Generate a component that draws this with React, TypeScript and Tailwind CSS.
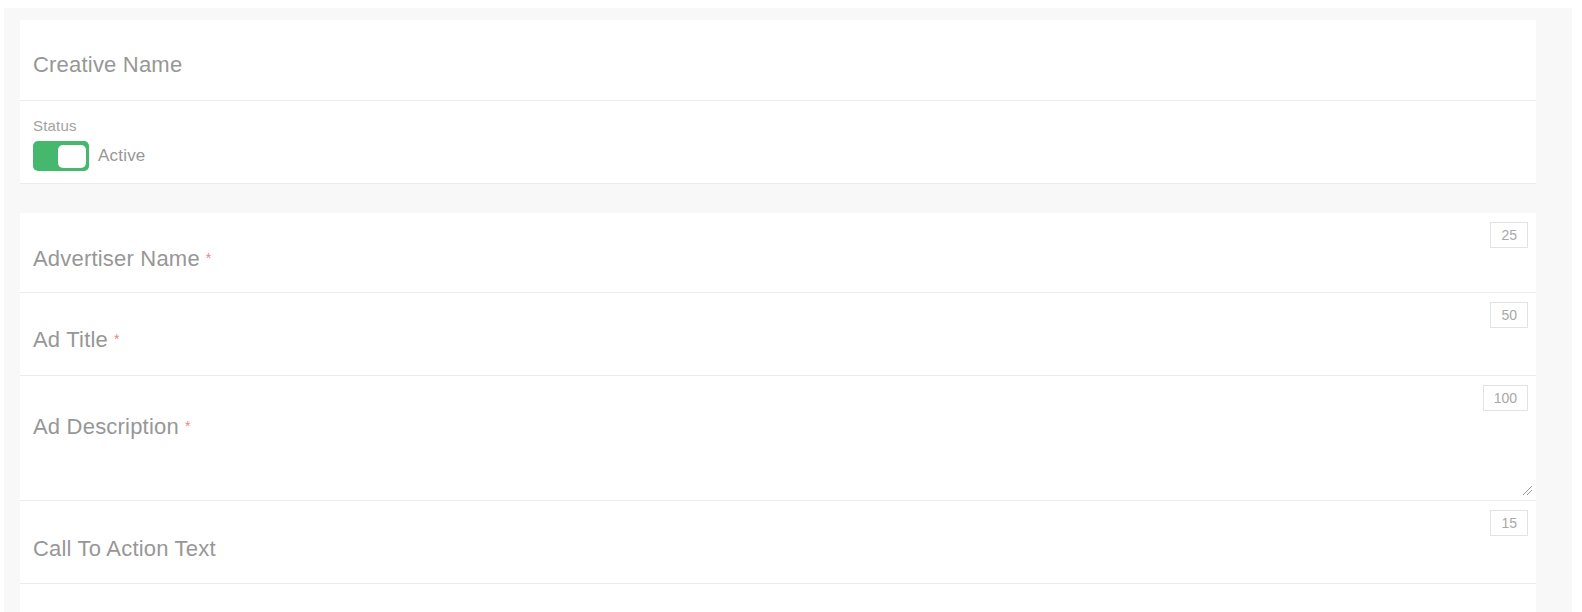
import React from 'react';

const FONT = { fontFamily: '"Liberation Sans", Arial, sans-serif' };

function Counter({ value }: { value: string }) {
  return (
    <span className="absolute top-[9px] right-[8px] flex h-[26px] items-center border border-[#e3e3e3] px-[10px] text-[14px] text-[#a8a8a8]">
      {value}
    </span>
  );
}

function Label({ text, required }: { text: string; required?: boolean }) {
  return (
    <span className="text-[22px] leading-[26px] tracking-[0.2px] text-[#979797]">
      {text}
      {required && <span className="relative -top-[3px] ml-[6px] text-[14px] text-[#e48a8a]">*</span>}
    </span>
  );
}

function ResizeHandle() {
  return (
    <svg className="absolute bottom-[4px] right-[3px]" width="12" height="12" viewBox="0 0 12 12">
      <path d="M2 11 L11 2 M6 11 L11 6" stroke="#9a9a9a" strokeWidth="1" fill="none" />
    </svg>
  );
}

export default function App() {
  return (
    <div className="h-[612px] w-full overflow-hidden bg-white pt-2 pr-[10px] pl-1" style={FONT}>
      <div className="h-full bg-[#f8f8f8] pt-3 pr-9 pl-4">
        {/* general */}
        <div className="bg-white">
          <div className="flex h-[81px] items-center border-b border-[#ececec] pt-[10px] pl-[13px]">
            <Label text="Creative Name" />
          </div>
          <div className="h-[83px] border-b border-[#ececec] pt-[16px] pl-[13px]">
            <div className="text-[15px] leading-[18px] tracking-[0.2px] text-[#a2a2a2]">Status</div>
            <div className="mt-[6px] flex items-center gap-[9px]">
              <div className="flex h-[30px] w-[56px] items-center justify-end rounded-[5px] bg-[#45b86d] pr-[3px]">
                <div className="h-[23px] w-[28px] rounded-[5px] bg-white" />
              </div>
              <span className="text-[17px] tracking-[0.2px] text-[#979797]">Active</span>
            </div>
          </div>
        </div>

        {/* ad copy */}
        <div className="mt-[29px] bg-white">
          <div className="relative flex h-[80px] items-center border-b border-[#ececec] pt-[14px] pl-[13px]">
            <Label text="Advertiser Name" required />
            <Counter value="25" />
          </div>
          <div className="relative flex h-[83px] items-center border-b border-[#ececec] pt-[14px] pl-[13px]">
            <Label text="Ad Title" required />
            <Counter value="50" />
          </div>
          <div className="relative h-[125px] border-b border-[#ececec] pt-[38px] pl-[13px]">
            <Label text="Ad Description" required />
            <Counter value="100" />
            <ResizeHandle />
          </div>
          <div className="relative flex h-[83px] items-center border-b border-[#ececec] pt-[14px] pl-[13px]">
            <Label text="Call To Action Text" />
            <Counter value="15" />
          </div>
          <div className="h-[60px]" />
        </div>
      </div>
    </div>
  );
}
